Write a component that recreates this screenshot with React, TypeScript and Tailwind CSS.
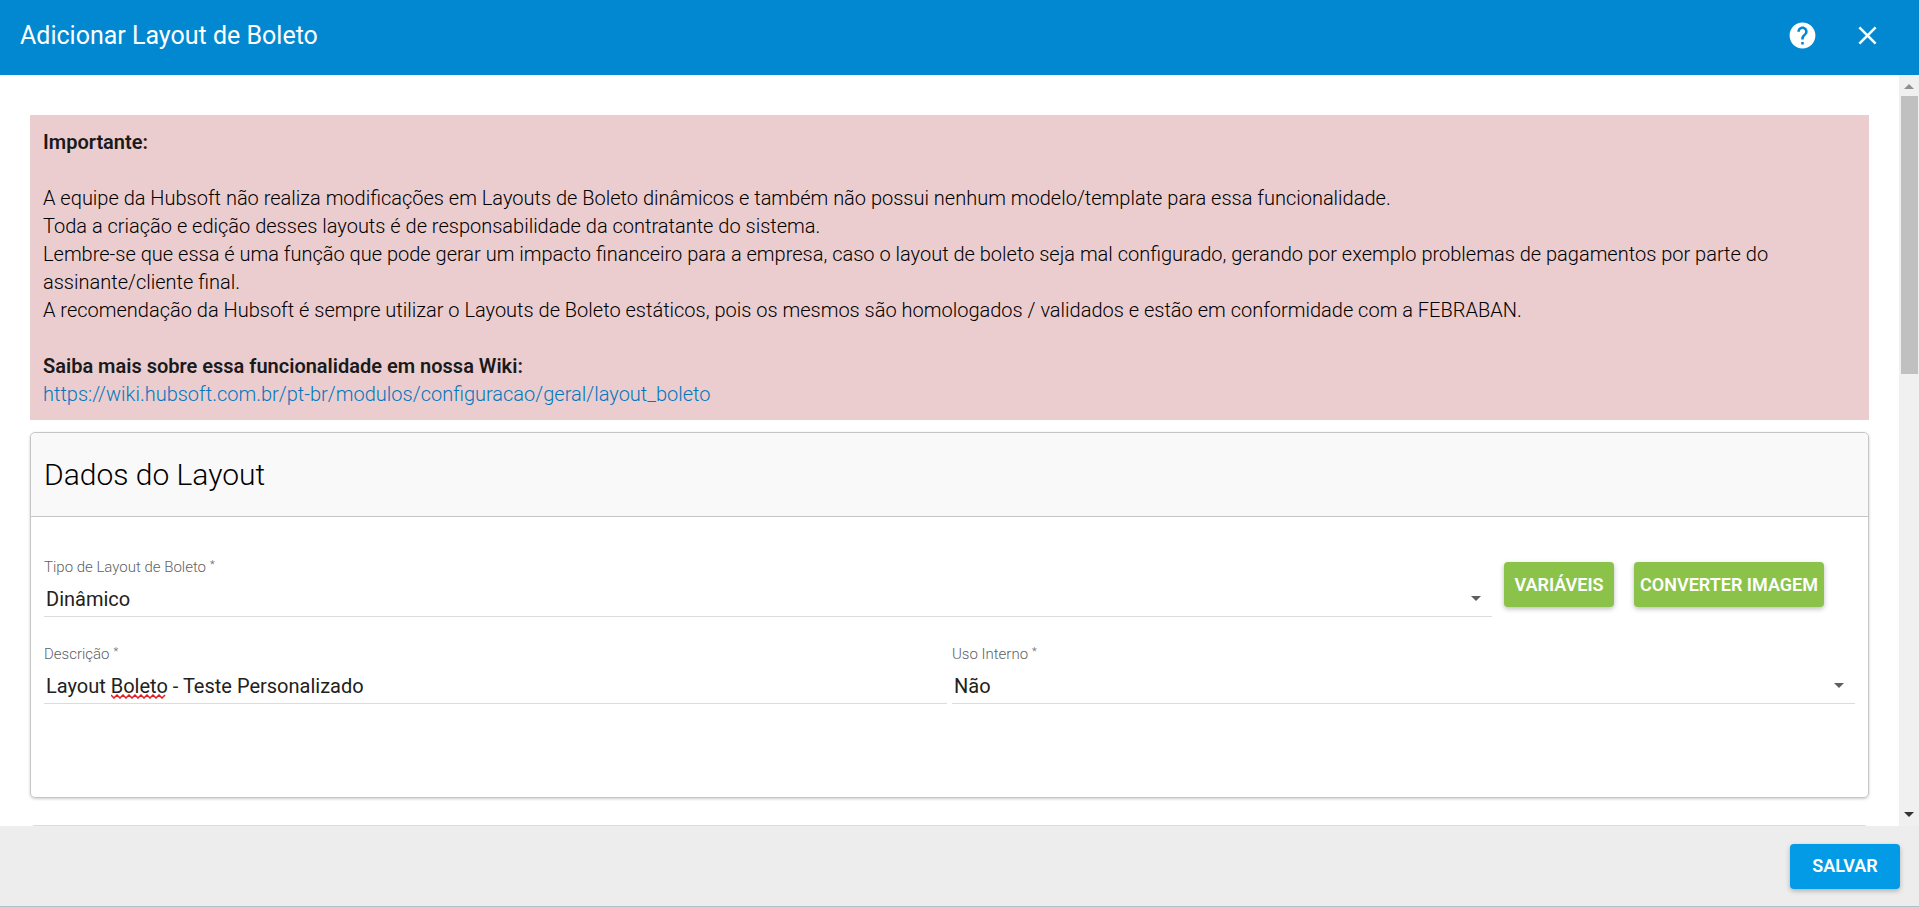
import { useState, type ReactNode } from 'react'
import { MdClose, MdHelp } from 'react-icons/md'

const WIKI_URL = 'https://wiki.hubsoft.com.br/pt-br/modulos/configuracao/geral/layout_boleto'

interface FieldProps {
  id: string
  label: string
  children: ReactNode
}

function Field({ id, label, children }: FieldProps) {
  return (
    <div className="flex-1 min-w-0">
      <label htmlFor={id} className="block h-5 text-[15px] leading-5 font-light text-[#5f5f5f]">
        {label}
        <span className="ml-1 text-[11px] align-top leading-4">*</span>
      </label>
      <div className="relative mt-1 border-b border-[#dcdcdc]">{children}</div>
    </div>
  )
}

interface SelectProps {
  id: string
  value: string
  options: string[]
  onChange: (value: string) => void
}

function Select({ id, value, options, onChange }: SelectProps) {
  return (
    <>
      <select
        id={id}
        value={value}
        onChange={(e) => onChange(e.target.value)}
        className="block w-full h-[35px] px-[2px] appearance-none bg-transparent text-xl text-[#212121] outline-none"
      >
        {options.map((option) => (
          <option key={option} value={option}>{option}</option>
        ))}
      </select>
      <svg className="absolute right-[11px] top-[15px] h-[5px] w-[10px] pointer-events-none" viewBox="0 0 10 5">
        <path d="M0 0h10L5 5z" fill="#5f5f5f" />
      </svg>
    </>
  )
}

function Scrollbar() {
  return (
    <div className="flex w-5 shrink-0 flex-col items-center bg-[#f0f0f0]" aria-hidden="true">
      <svg className="h-[21px] w-5 shrink-0" viewBox="0 0 20 21">
        <path d="M5 14h10L10 9z" fill="#8f8f8f" />
      </svg>
      <div className="h-[278px] w-[17px] bg-[#c0c0c0]" />
      <svg className="mt-auto h-[21px] w-5 shrink-0" viewBox="0 0 20 21">
        <path d="M5 7h10L10 12z" fill="#333" />
      </svg>
    </div>
  )
}

export default function App() {
  const [tipo, setTipo] = useState('Dinâmico')
  const [descricao, setDescricao] = useState('Layout Boleto - Teste Personalizado')
  const [usoInterno, setUsoInterno] = useState('Não')

  return (
    <div className="flex h-screen flex-col bg-white font-['Roboto',sans-serif] text-xl text-[#212121]">
      <header className="flex h-[75px] shrink-0 items-center justify-between bg-[#0288d1] pb-1 pl-5 pr-9 text-white">
        <h1 className="text-[25px]">Adicionar Layout de Boleto</h1>
        <div className="flex items-center gap-[34px]">
          <button type="button" aria-label="Ajuda"><MdHelp size={31} /></button>
          <button type="button" aria-label="Fechar"><MdClose size={31} /></button>
        </div>
      </header>

      <div className="flex min-h-0 flex-1">
        <main className="min-w-0 flex-1 overflow-hidden px-[30px] pt-10">
          <section className="bg-[#ebcdcf] px-[13px] pt-[13px] pb-3 text-xl leading-7 font-light text-black">
            <p className="font-semibold text-[#1a1a1a]">Importante:</p>
            <br />
            <p>A equipe da Hubsoft não realiza modificações em Layouts de Boleto dinâmicos e também não possui nenhum modelo/template para essa funcionalidade.</p>
            <p>Toda a criação e edição desses layouts é de responsabilidade da contratante do sistema.</p>
            <p>Lembre-se que essa é uma função que pode gerar um impacto financeiro para a empresa, caso o layout de boleto seja mal configurado, gerando por exemplo problemas de pagamentos por parte do assinante/cliente final.</p>
            <p>A recomendação da Hubsoft é sempre utilizar o Layouts de Boleto estáticos, pois os mesmos são homologados / validados e estão em conformidade com a FEBRABAN.</p>
            <br />
            <p className="font-semibold text-[#1a1a1a]">Saiba mais sobre essa funcionalidade em nossa Wiki:</p>
            <a href={WIKI_URL} className="block text-[#0277bd]">{WIKI_URL}</a>
          </section>

          <section className="mt-3 rounded-[5px] border border-[#c6c6c6] shadow-[0_1px_3px_rgba(0,0,0,0.2)]">
            <div className="flex h-[84px] items-center rounded-t-[5px] border-b border-[#c6c6c6] bg-[#f9f9f9] px-[13px]">
              <h2 className="text-[30px] font-light text-black">Dados do Layout</h2>
            </div>
            <form className="h-[280px] px-[13px] pt-10" onSubmit={(e) => e.preventDefault()}>
              <div className="flex items-start pr-[31px]">
                <Field id="tipo" label="Tipo de Layout de Boleto">
                  <Select id="tipo" value={tipo} options={['Dinâmico', 'Estático']} onChange={setTipo} />
                </Field>
                <div className="ml-3 mt-[5px] flex gap-5">
                  <button type="button" className="h-[45px] w-[110px] rounded-[4px] bg-[#8bc34a] text-lg font-semibold text-white shadow-[0_2px_5px_rgba(0,0,0,0.26)]">
                    VARIÁVEIS
                  </button>
                  <button type="button" className="h-[45px] w-[190px] rounded-[4px] bg-[#8bc34a] text-lg font-semibold text-white shadow-[0_2px_5px_rgba(0,0,0,0.26)]">
                    CONVERTER IMAGEM
                  </button>
                </div>
              </div>
              <div className="mt-[27px] flex gap-[5px]">
                <Field id="descricao" label="Descrição">
                  <input
                    id="descricao"
                    type="text"
                    value={descricao}
                    spellCheck={false}
                    onChange={(e) => setDescricao(e.target.value)}
                    className="block w-full h-[35px] px-[2px] bg-transparent text-xl text-[#212121] outline-none"
                  />
                  <svg className="absolute left-[67px] top-[26px] h-[5px] w-[57px] pointer-events-none" viewBox="0 0 57 5">
                    <path
                      d="M0 1l3 3 3-3 3 3 3-3 3 3 3-3 3 3 3-3 3 3 3-3 3 3 3-3 3 3 3-3 3 3 3-3 3 3 3-3"
                      fill="none"
                      stroke="#e01b24"
                      strokeWidth="1.5"
                    />
                  </svg>
                </Field>
                <Field id="uso-interno" label="Uso Interno">
                  <Select id="uso-interno" value={usoInterno} options={['Não', 'Sim']} onChange={setUsoInterno} />
                </Field>
              </div>
            </form>
          </section>

          <section className="mt-[27px] h-20 rounded-[5px] border border-[#dcdcdc]" />
        </main>
        <Scrollbar />
      </div>

      <footer className="flex h-[81px] shrink-0 items-center justify-end border-b border-[#a9c4c4] bg-[#ededed] pr-[19px]">
        <button type="button" className="h-[45px] w-[110px] rounded-[4px] bg-[#039be5] text-lg font-semibold text-white shadow-[0_2px_5px_rgba(0,0,0,0.26)]">
          SALVAR
        </button>
      </footer>
    </div>
  )
}
